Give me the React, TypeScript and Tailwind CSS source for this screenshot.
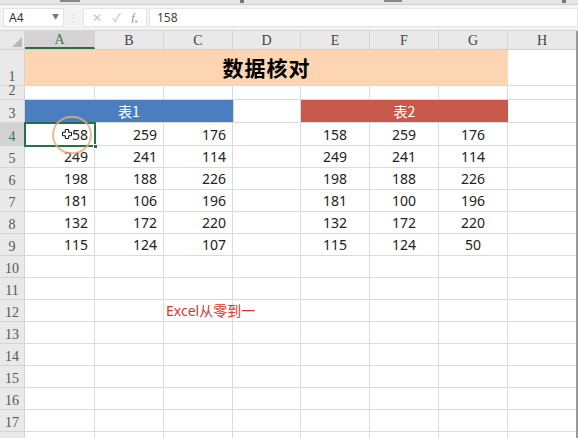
import React from "react";

const COLS = [70, 69, 69, 68, 69, 69, 69, 69];
const LETTERS = ["A", "B", "C", "D", "E", "F", "G", "H"];
const t1 = [
  [158, 259, 176],
  [249, 241, 114],
  [198, 188, 226],
  [181, 106, 196],
  [132, 172, 220],
  [115, 124, 107],
];
const t2 = [
  [158, 259, 176],
  [249, 241, 114],
  [198, 188, 226],
  [181, 100, 196],
  [132, 172, 220],
  [115, 124, 50],
];

const serif = { fontFamily: '"Liberation Serif", "Times New Roman", serif' };
const sans = { fontFamily: '"Noto Sans", "Open Sans", "Noto Sans CJK SC", sans-serif' };

function RowHead({ n, h, active }: { n?: number; h: number; active?: boolean }) {
  return (
    <div
      className={`w-[25px] shrink-0 flex items-end justify-center pb-[1px] border-b border-r border-[#d4d4d4] text-[14px] leading-none ${
        active ? "bg-[#d3d3d3] text-[#3f7a55]" : "bg-[#e9e9e9] text-[#555]"
      }`}
      style={{ ...serif, height: h }}
    >
      {n}
    </div>
  );
}

function Cell({ w, children, cls = "" }: { w: number; children?: React.ReactNode; cls?: string }) {
  return (
    <div
      className={`shrink-0 h-full border-r border-b border-[#dadada] flex items-center text-[14px] text-[#222] ${cls}`}
      style={{ width: w }}
    >
      {children}
    </div>
  );
}

function CursorIcon() {
  return (
    <svg width="10" height="10" viewBox="0 0 10 10" className="mr-[0px]">
      <path
        d="M3.3 0.5h3.4v2.8h2.8v3.4H6.7v2.8H3.3V6.7H0.5V3.3h2.8z"
        fill="#fff"
        stroke="#111"
        strokeWidth="1"
      />
    </svg>
  );
}

export default function App() {
  const blankRow = (n: number | undefined, key: number, h: number, content?: (i: number) => React.ReactNode) => (
    <div className="flex" style={{ height: h }} key={key}>
      <RowHead n={n} h={h} />
      {COLS.map((w, i) => (
        <Cell key={i} w={w}>
          {content ? content(i) : null}
        </Cell>
      ))}
    </div>
  );

  return (
    <div className="w-[578px] h-[438px] overflow-hidden bg-white relative" style={sans}>
      {/* toolbar remnant */}
      <div className="h-[5px] bg-[#e6e6e6] border-b border-[#cfcfcf] flex items-start gap-[60px] pl-[60px]">
        <div className="w-[20px] h-[2px] bg-[#888]" />
        <div className="w-[4px] h-[3px] bg-[#777] ml-[100px]" />
        <div className="w-[18px] h-[2px] bg-[#888] ml-[80px]" />
        <div className="w-[4px] h-[3px] bg-[#777] ml-[100px]" />
      </div>
      {/* formula bar */}
      <div className="h-[26px] bg-[#f3f3f3] flex items-center pl-[3px] border-b border-[#d6d6d6]">
        <div className="w-[61px] h-[19px] bg-white border border-[#e2e2e2] flex items-center justify-between pl-[5px] pr-[4px] text-[12px] text-[#333]">
          <span>A4</span>
          <span className="text-[7px] text-[#777]">▼</span>
        </div>
        <div className="w-[19px] flex justify-center text-[#c8c8c8] text-[11px] leading-none">⋮</div>
        <div className="w-[64px] h-[19px] bg-white border border-[#e6e6e6] flex items-center justify-around px-[3px] text-[#c4c4c4] text-[12px]">
          <span>✕</span>
          <span>✓</span>
          <span className="italic text-[#888] text-[11px]" style={serif}>f<sub className="text-[7px]">x</sub></span>
        </div>
        <div className="flex-1 h-[19px] bg-white border border-[#e6e6e6] ml-[2px] flex items-center pl-[7px] text-[12px] text-[#444]">
          158
        </div>
      </div>
      {/* column header */}
      <div className="flex h-[19px] bg-[#e9e9e9] border-b border-[#cfcfcf]">
        <div className="w-[25px] shrink-0 h-full border-r border-[#d4d4d4] relative">
          <div className="absolute right-[2px] bottom-[2px] w-0 h-0 border-l-[10px] border-l-transparent border-b-[10px] border-b-[#b8b8b8]" />
        </div>
        {COLS.map((w, i) => (
          <div
            key={i}
            className={`shrink-0 h-full flex items-center justify-center text-[14px] border-r border-[#d4d4d4] ${
              i === 0 ? "bg-[#d4d4d4] text-[#3f7a55] border-b-2 border-b-[#217346]" : "text-[#444]"
            }`}
            style={{ ...serif, width: w }}
          >
            {LETTERS[i]}
          </div>
        ))}
      </div>

      {/* row 1 */}
      <div className="flex h-[36px]">
        <RowHead n={1} h={36} />
        <div
          className="w-[483px] shrink-0 h-full bg-[#fdd5b2] border-b border-[#dadada] flex items-center justify-center text-[21px] font-bold text-black tracking-[1px]"
          style={{ fontFamily: '"Noto Sans CJK SC", sans-serif' }}
        >
          数据核对
        </div>
        <Cell w={69} />
      </div>
      {blankRow(2, 2, 14)}
      {/* row 3 */}
      <div className="flex h-[23px]">
        <RowHead n={3} h={23} />
        <div
          className="w-[208px] shrink-0 h-full bg-[#4a7ebf] border-b border-[#dadada] flex items-center justify-center text-white text-[14px]"
          style={{ fontFamily: '"Noto Sans CJK SC", sans-serif' }}
        >
          表1
        </div>
        <Cell w={68} cls="border-l border-l-[#dadada]" />
        <div
          className="w-[207px] shrink-0 h-full bg-[#c95a4b] border-b border-[#dadada] flex items-center justify-center text-white text-[14px]"
          style={{ fontFamily: '"Noto Sans CJK SC", sans-serif' }}
        >
          表2
        </div>
        <Cell w={69} />
      </div>
      {/* data rows */}
      {t1.map((r, ri) => {
        const h = ri === 0 ? 23 : 22;
        return (
          <div className="flex relative" style={{ height: h }} key={ri}>
            <RowHead n={ri + 4} h={h} active={ri === 0} />
            {r.map((v, i) => (
              <Cell key={i} w={COLS[i]} cls="justify-end pr-[6px]">
                {ri === 0 && i === 0 ? (
                  <>
                    <CursorIcon />
                    <span>58</span>
                  </>
                ) : (
                  v
                )}
              </Cell>
            ))}
            <Cell w={68} />
            {t2[ri].map((v, i) => (
              <Cell key={i} w={COLS[4 + i]} cls="justify-center">
                {v}
              </Cell>
            ))}
            <Cell w={69} />
          </div>
        );
      })}
      {Array.from({ length: 8 }).map((_, k) =>
        blankRow(10 + k, 10 + k, 22, (i) =>
          k === 2 && i === 2 ? (
            <span
              className="whitespace-nowrap pl-[2px] text-[#d8382c] text-[14px] relative z-10"
              style={{ fontFamily: '"Noto Sans", "Noto Sans CJK SC", sans-serif' }}
            >
              Excel从零到一
            </span>
          ) : null
        )
      )}
      {blankRow(undefined, 18, 22)}

      {/* selection of A4 */}
      <div className="absolute left-[24px] top-[122px] w-[72px] h-[25px] border-2 border-[#217346] pointer-events-none" />
      <div className="absolute left-[93px] top-[144px] w-[5px] h-[5px] bg-[#217346] border border-white" />
      {/* orange click circle */}
      <div className="absolute left-[52px] top-[116px] w-[40px] h-[38px] rounded-full border-2 border-[#f0a878] opacity-80" />
      {/* right edge */}
      <div className="absolute right-0 top-[31px] bottom-0 w-[2px] bg-[#9a9a9a]" />
    </div>
  );
}
